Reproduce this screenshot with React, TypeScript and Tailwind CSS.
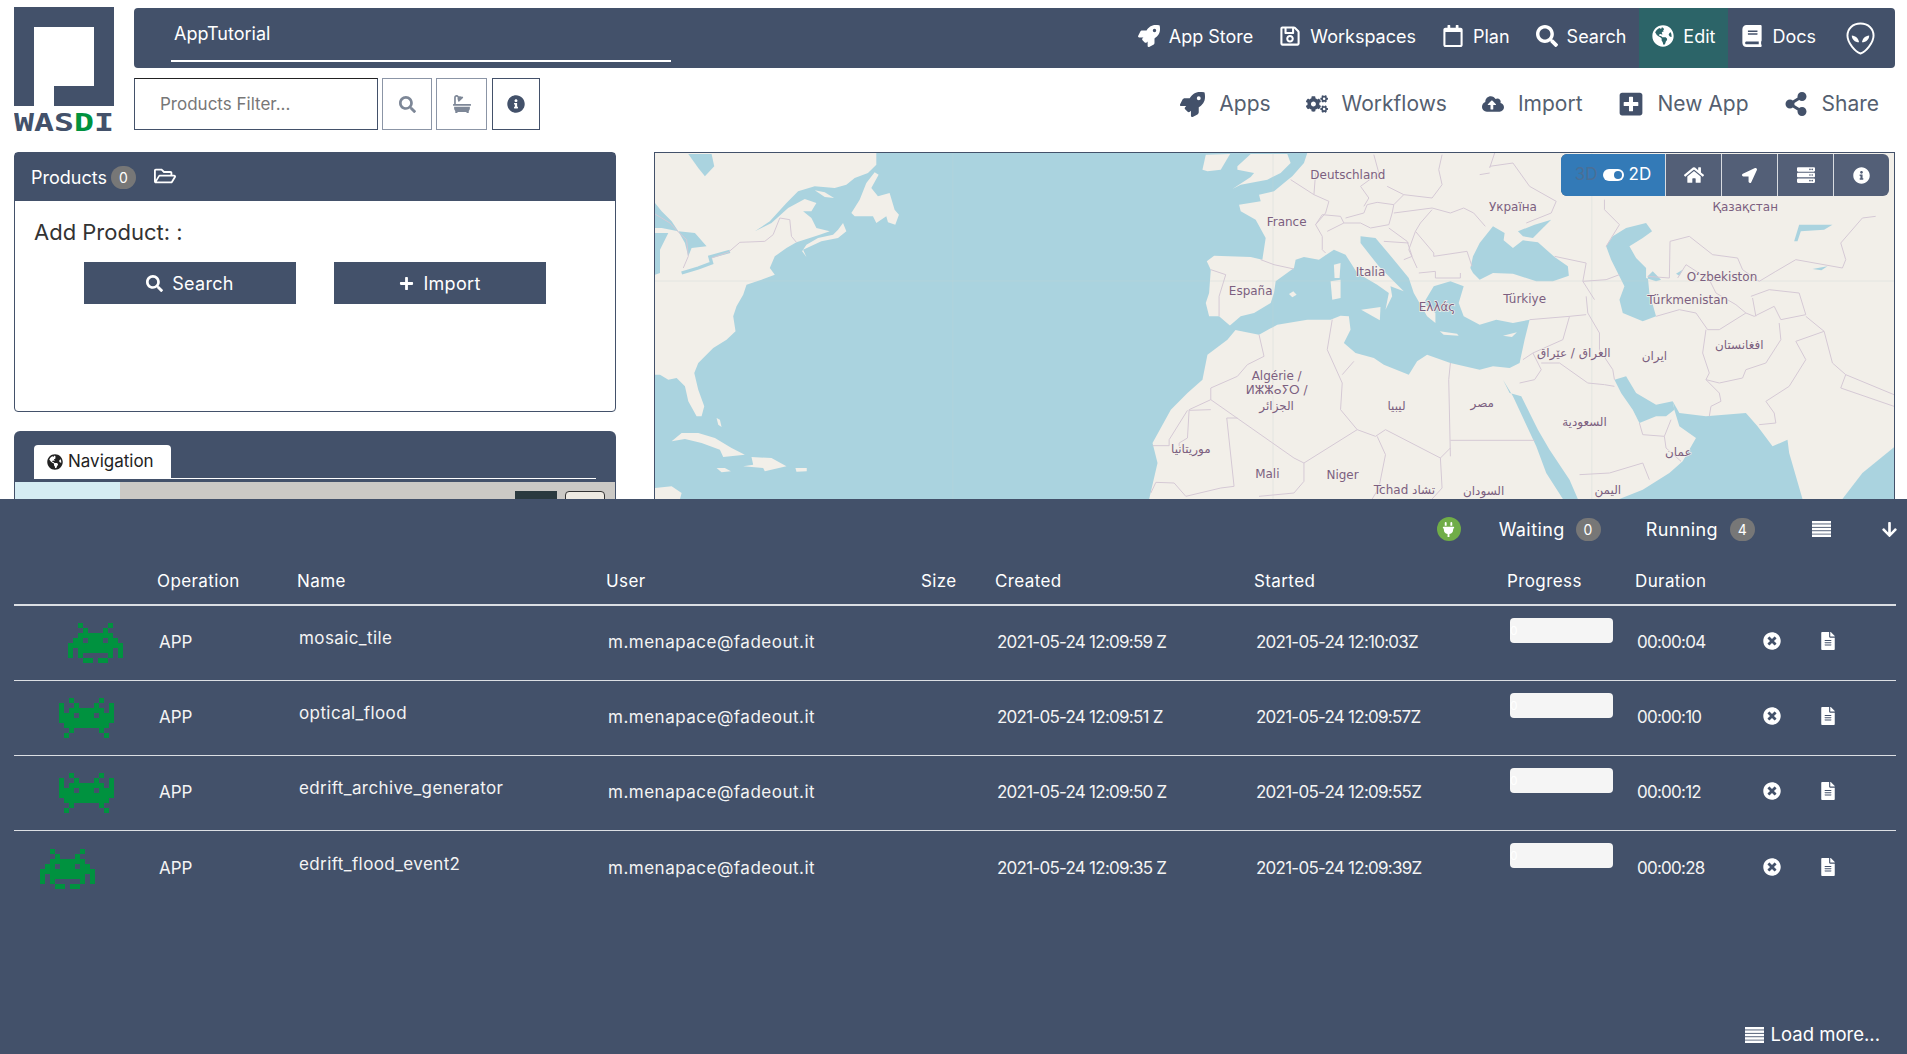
import {
  FaArrowDown, FaBath, FaBook, FaCloudUploadAlt, FaCogs, FaFileAlt, FaGlobeAmericas, FaHome, FaInfoCircle,
  FaLocationArrow, FaPlug, FaPlus, FaPlusSquare, FaRegCalendar, FaRegFolderOpen, FaRegSave, FaRocket,
  FaSearch, FaServer, FaShareAlt, FaTimesCircle,
} from 'react-icons/fa';

const jobs = [
  { name: 'mosaic_tile', created: '2021-05-24 12:09:59 Z', started: '2021-05-24 12:10:03Z', duration: '00:00:04', frame: 0, indent: 'pl-[54px]' },
  { name: 'optical_flood', created: '2021-05-24 12:09:51 Z', started: '2021-05-24 12:09:57Z', duration: '00:00:10', frame: 1, indent: 'pl-[45px]' },
  { name: 'edrift_archive_generator', created: '2021-05-24 12:09:50 Z', started: '2021-05-24 12:09:55Z', duration: '00:00:12', frame: 1, indent: 'pl-[45px]' },
  { name: 'edrift_flood_event2', created: '2021-05-24 12:09:35 Z', started: '2021-05-24 12:09:39Z', duration: '00:00:28', frame: 0, indent: 'pl-[26px]' },
];

const invaderFrames = [
  ['..X.....X..', '...X...X...', '..XXXXXXX..', '.XX.XXX.XX.', 'XXXXXXXXXXX', 'X.XXXXXXX.X', 'X.X.....X.X', '...XX.XX...'],
  ['..X.....X..', 'X..X...X..X', 'X.XXXXXXX.X', 'XXX.XXX.XXX', 'XXXXXXXXXXX', '.XXXXXXXXX.', '..X.....X..', '.X.......X.'],
];

function Invader({ frame }: { frame: number }) {
  return (
    <svg width="55" height="40" viewBox="0 0 11 8" shapeRendering="crispEdges">
      {invaderFrames[frame].map((row, y) =>
        row.split('').map((c, x) => (c === 'X' ? <rect key={x + '-' + y} x={x} y={y} width="1" height="1" fill="#00923f" /> : null)),
      )}
    </svg>
  );
}

function Logo() {
  return (
    <svg width="100" height="130" viewBox="0 0 100 130" className="shrink-0">
      <rect width="100" height="99" fill="#43516a" />
      <path d="M20 20H80V79H40V99H20Z" fill="#fff" />
      <text transform="translate(0 124) scale(1 1.45)" fontFamily="'DejaVu Sans Mono', monospace" fontSize="17" fontWeight="700" fill="#43516a" textLength="100" lengthAdjust="spacingAndGlyphs">
        WAS<tspan fill="#00923f">D</tspan>I
      </text>
    </svg>
  );
}

function Alien() {
  return (
    <svg width="29" height="33" viewBox="0 0 30 34" className="ml-[17px]">
      <path d="M15 1.500C7 1.500 1.500 7 1.500 14C1.500 22 10 31 15 32.500C20 31 28.500 22 28.500 14C28.500 7 23 1.500 15 1.500Z" fill="none" stroke="#fff" strokeWidth="2" />
      <path d="M6 14C10 14.500 13 17 13.500 21C9 21 6 18 6 14Z" fill="#fff" />
      <path d="M24 14C20 14.500 17 17 16.500 21C21 21 24 18 24 14Z" fill="#fff" />
    </svg>
  );
}

function ListIcon({ className }: { className?: string }) {
  return (
    <svg width="19" height="16" viewBox="0 0 19 16" className={className} fill="currentColor">
      <rect width="19" height="2.500" />
      <rect y="3.400" width="19" height="2.500" />
      <rect y="6.800" width="19" height="2.500" />
      <rect y="10.200" width="19" height="2.500" />
      <rect y="13.500" width="19" height="2.500" />
    </svg>
  );
}

function TopItem({ icon, label, active }: { icon: React.ReactNode; label: string; active?: boolean }) {
  return (
    <div className={`flex items-center gap-[9px] h-full px-[13px] pb-[4px] ${active ? 'bg-[#2c6468]' : ''}`}>
      <span className="text-[22px]">{icon}</span>
      <span>{label}</span>
    </div>
  );
}

function ToolItem({ icon, label }: { icon: React.ReactNode; label: string }) {
  return (
    <div className="flex items-center gap-[14px]">
      <span className="text-[#43516a]">{icon}</span>
      <span>{label}</span>
    </div>
  );
}

function Badge({ value }: { value: number }) {
  return (
    <span className="flex items-center justify-center w-[25px] h-[23px] rounded-full bg-[#777] text-[14px] text-white">{value}</span>
  );
}

const land = [
  // north america, crop 6
  '0,0 665,0 665,35 640,60 600,75 575,95 540,105 480,100 430,115 395,150 345,205 300,235 350,210 400,165 450,138 485,150 470,175 445,175 470,195 485,225 525,235 495,245 465,255 425,268 395,285 360,310 345,345 360,365 320,380 275,395 265,425 245,460 235,490 242,535 215,560 175,585 130,630 118,660 130,710 148,760 140,790 125,790 100,745 90,700 65,675 40,680 15,665 0,665',
  '445,290 500,265 550,255 575,235 565,210 550,230 535,245 490,255 455,275 442,295 455,312',
  '590,180 615,140 635,90 660,58 672,65 650,105 670,130 705,120 720,170 733,185 722,215 700,208 695,190 665,210 655,190 600,190',
  '480,112 510,118 538,135 510,132',
  '50,865 80,840 130,840 180,855 230,885 270,905 205,912 195,890 140,870 90,858',
  '265,940 295,935 290,912 350,915 395,940 330,955 325,945',
  '185,945 210,945 228,955 200,958',
  '422,945 456,945 456,955 425,956',
  '0,1005 50,1000 80,1020 75,1038 0,1038',
  '185,795 195,800 200,822 190,815',
];

const westCoast =
  '1960,0 1950,30 1915,70 1900,82 1860,115 1815,125 1820,145 1755,155 1760,175 1805,200 1835,255 1825,320 1790,312 1680,308 1658,325 1670,350 1665,420 1655,450 1665,490 1695,490 1730,520 1745,530 1720,560 1660,605 1645,680 1600,720 1550,770 1495,870 1510,930 1485,1038 3723,1038 3723,0';

const gbIreland = [
  '1645,50 1655,5 1728,3 1700,50 1660,55',
  '1735,108 1790,72 1800,60 1750,50 1750,40 1790,3 1900,3 1910,30 1880,60 1840,80 1760,95',
];

const waters = [
  // mediterranean
  '1725,520 1760,490 1800,480 1850,450 1860,420 1865,385 1920,345 1925,320 1950,312 1995,320 2040,290 2075,305 2110,360 2170,395 2205,420 2195,470 2215,430 2210,400 2250,415 2225,390 2175,340 2120,270 2120,250 2165,255 2220,320 2265,375 2280,420 2320,490 2345,510 2345,480 2310,450 2340,400 2390,385 2430,400 2415,450 2430,490 2478,515 2528,500 2578,510 2628,500 2613,560 2598,630 2568,645 2518,640 2478,650 2390,630 2320,605 2290,625 2265,665 2190,635 2160,615 2105,600 2070,570 2090,530 2085,490 2060,488 2030,500 1960,500 1870,515 1815,545 1740,530',
  // black sea
  '2450,345 2458,310 2478,270 2518,220 2553,240 2550,262 2578,285 2608,262 2653,268 2703,312 2743,340 2746,368 2698,385 2648,385 2578,362 2518,360 2478,380 2458,360',
  '2593,235 2643,215 2693,200 2668,225 2638,255 2608,250',
  // caspian
  '2858,280 2878,250 2918,225 2978,210 2996,235 2968,255 2928,280 2948,315 2978,345 2978,375 3008,385 3023,380 2998,355 2983,370 2988,420 3008,490 2968,505 2908,480 2898,440 2913,400 2873,320',
  // red sea, gulf, arabian sea, bengal
  '2548,680 2568,720 2603,730 2653,830 2688,890 2748,980 2773,1038 2728,1038 2678,960 2648,880 2578,730',
  '2883,680 2918,670 2948,720 3008,755 3058,745 3063,770 3038,790 3008,790 2958,810 2938,770 2903,720',
  '3058,745 3078,780 3158,790 3278,780 3313,820 3358,880 3403,860 3408,900 3448,1038 2898,1038 2968,1010 3048,960 3088,925 3128,855 3078,820 3063,770',
  '3568,1038 3628,960 3726,880 3726,1038',
  // small lakes
  '3423,265 3438,215 3538,215 3513,230 3443,235 3433,265',
  '3068,362 3088,350 3078,368',
  '3478,348 3523,340 3505,352',
  // inland north america
  '100,3 170,3 178,40 150,70 130,45',
  '0,150 20,175 50,205 70,235 20,225 0,225',
  '70,235 120,240 155,280 110,285 100,310 90,270',
  '0,240 40,240 15,290 15,360 0,365',
];

const islands = [
  '2040,335 2060,330 2057,375 2042,375',
  '2030,385 2060,380 2060,435 2035,440',
  '2122,470 2180,462 2178,502',
  '1905,423 1918,415 1928,425 1915,433',
  '2358,535 2410,542 2415,548 2370,545',
  '2548,548 2590,538 2575,552',
];

const borders = [
  // north america
  '0,183 45,210 65,232 95,260 100,310 85,345', '170,315 220,298 255,268 330,265 355,245 375,195 405,200 410,250 425,268',
  // europe
  '1820,320 1860,335 1920,348', '1670,350 1715,365 1695,430 1695,490', '1910,80 1980,125 2025,145 2015,180 1985,215 2005,250 2005,290 2015,300',
  '1980,125 1985,60', '2160,5 2175,60 2120,100 2145,135 2130,160', '1985,215 2005,185 2060,190 2070,210 2020,235', '2075,195 2130,180 2140,155 2170,148 2220,155 2215,180 2205,215 2150,225 2120,210 2070,210',
  '2200,100 2250,125 2335,135 2365,95 2355,50 2365,5', '2220,155 2250,125', '2220,180 2335,165 2390,180 2430,165 2460,180 2495,220', '2335,170 2300,210 2285,235 2340,300 2340,310 2440,295 2455,340',
  '2205,225 2260,265 2275,310 2250,320', '2190,265 2265,270', '2295,360 2345,355 2345,375 2420,375 2420,360', '2285,235 2265,290 2290,345',
  // africa
  '1815,545 1830,610 1780,635 1750,670 1670,705 1670,740 1920,915 1950,930 2110,830 2060,770 2065,690 2020,590 2035,500', '2065,665 2100,625',
  '2390,630 2385,680 2390,910', '2110,830 2165,850 2195,830 2360,915 2390,885', '2170,850 2195,905 2175,1005 2155,1038', '2360,915 2365,1005 2335,1038', '2390,862 2643,862',
  '1718,795 1740,1000 1700,1005 1595,1030 1560,990 1505,988 1490,1020', '1718,795 1750,795', '1950,930 1950,985 1920,1020 1815,1030', '1670,740 1605,770 1600,855 1575,870 1575,880', '1670,770 1605,772', '1495,878 1545,878 1545,860 1600,772',
  // asia
  '2508,40 2578,30 2628,100 2708,145 2693,180 2618,210', '2478,65 2508,60', '2523,0 2508,45', '2853,140 2853,170 2898,215 2858,280', '2703,310 2798,330 2788,385 2823,440', '2788,385 2858,380 2898,365',
  '2628,500 2748,490 2798,485', '2798,430 2803,480 2838,540 2838,590 2878,650 2883,680', '2748,490 2728,560 2638,600', '2663,630 2718,630 2803,690 2853,695 2883,700', '2598,690 2643,680 2663,650 2638,600 2608,620',
  '2958,810 2968,845 3033,850 3053,800', '3033,850 3038,885 3083,925', '2778,965 2868,960 2968,930 2988,980',
  '3158,530 3148,600 3168,660 3158,680 3198,720 3203,745 3173,760 3168,790', '3008,490 3078,470 3128,480 3163,530 3198,530 3278,480 3303,490 3363,460 3383,500 3458,485',
  '3378,510 3383,560 3338,630 3278,650 3268,675 3198,690 3158,680', '3458,490 3513,535 3428,565 3458,620 3408,700 3338,745 3363,780 3368,810 3318,815', '3513,535 3538,630 3578,665 3723,725', '3578,665 3563,705 3723,760',
  '3048,375 3050,265 3108,250 3178,305 3253,315 3268,350 3318,385', '2983,370 3048,375', '3073,375 3098,335 3168,380 3188,420 3248,455 3278,480',
  '3318,385 3368,355 3428,320 3568,345 3578,320 3563,270 3628,195 3668,190', '3293,430 3348,410 3438,420 3458,485', '3308,490 3298,435',
];

const labels: [string, number, number][] = [
  ['Deutschland', 2082, 78], ['France', 1898, 220], ['Italia', 2150, 370], ['España', 1790, 425], ['Ελλάς', 2350, 475],
  ['Algérie /', 1868, 680], ['ⵍⵣⵣⴰⵢⵔ /', 1868, 724], ['الجزائر', 1868, 770], ['ليبيا', 2228, 772], ['مصر', 2486, 762], ['موريتانيا', 1610, 900],
  ['Mali', 1840, 975], ['Niger', 2066, 977], ['Tchad تشاد', 2252, 1022], ['السودان', 2490, 1025],
  ['Україна', 2578, 175], ['Қазақстан', 3276, 175], ['Türkiye', 2613, 450], ['O‘zbekiston', 3206, 385], ['Türkmenistan', 3103, 452],
  ['العراق / عێراق', 2761, 612], ['ايران', 3003, 622], ['افغانستان', 3258, 588], ['السعودية', 2793, 820], ['عمان', 3075, 908], ['اليمن', 2863, 1022],
];

function WorldMap() {
  return (
    <svg viewBox="0 0 3723 1038" className="block w-full h-full" preserveAspectRatio="none">
      <rect width="3723" height="1038" fill="#aad3df" />
      <polygon points={westCoast} fill="#f2efe9" />
      {land.concat(gbIreland).map((p) => <polygon key={p} points={p} fill="#f2efe9" />)}
      {waters.map((p) => <polygon key={p} points={p} fill="#aad3df" />)}
      {islands.map((p) => <polygon key={p} points={p} fill="#f2efe9" />)}
      <polyline points="80,360 130,345 170,330 165,312 225,295" fill="none" stroke="#aad3df" strokeWidth="10" />
      <path d="M0 384H3723M895 0V1038M1857 0V1038M2815 0V1038" stroke="#c4d4d4" strokeWidth="2" opacity="0.45" />
      {borders.map((p) => <polyline key={p} points={p} fill="none" stroke="#d5c9d5" strokeWidth="3" />)}
      {labels.map(([t, x, y]) => (
        <text key={t} x={x} y={y} textAnchor="middle" fontFamily="'DejaVu Sans', sans-serif" fontSize="36" fill="#7c5f80" stroke="#f2efe9" strokeWidth="4" paintOrder="stroke">
          {t}
        </text>
      ))}
    </svg>
  );
}

function MapControl({ children }: { children: React.ReactNode }) {
  return <div className="flex items-center justify-center w-[56px] border-l border-[#d8dbe0] text-white text-[17px]">{children}</div>;
}

function JobRow({ job, last }: { job: (typeof jobs)[number]; last: boolean }) {
  return (
    <div className={`grid grid-cols-[143px_140px_309px_315px_74px_259px_253px_128px_119px_57px_1fr] items-center h-[75px] text-[#f4f4f4] text-[17px] ${last ? '' : 'border-b border-[#dcdfe4]'}`}>
      <div className={job.indent}><Invader frame={job.frame} /></div>
      <div className="pl-[2px]">APP</div>
      <div className="pl-[2px] mb-[8px] tracking-[0.4px]">{job.name}</div>
      <div className="pl-[2px] tracking-[0.5px]">m.menapace@fadeout.it</div>
      <div />
      <div className="pl-[2px] tracking-[-0.75px]">{job.created}</div>
      <div className="pl-[2px] tracking-[-0.75px]">{job.started}</div>
      <div className="pl-[3px] self-start pt-[12px]">
        <div className="w-[103px] h-[25px] rounded-[4px] bg-[#f5f5f5] text-[12px] text-white leading-[25px]">0</div>
      </div>
      <div className="pl-[2px] tracking-[-0.75px]">{job.duration}</div>
      <div className="pl-[9px] mb-[4px] text-white text-[18px]"><FaTimesCircle /></div>
      <div className="pl-[8px] mb-[4px] text-white text-[18px]"><FaFileAlt /></div>
    </div>
  );
}

export default function App() {
  return (
    <div className="flex flex-col w-[1907px] h-[1054px] overflow-hidden bg-white font-['Inter',sans-serif]">
      <div className="h-[499px] overflow-hidden">
        <div className="flex items-start gap-[20px] pl-[14px] pr-[12px] pt-[7px] h-[131px]">
          <Logo />
          <div className="flex-1 flex flex-col">
            <div className="flex items-center justify-between h-[60px] mt-[1px] pl-[37px] pr-[20px] rounded-[4px] bg-[#43516a] text-white text-[18px]">
              <div className="w-[500px] h-[49px] mt-[-1px] border-b-2 border-white pl-[3px] pt-[8px] leading-[26px]">AppTutorial</div>
              <div className="flex items-center h-full">
                <TopItem icon={<FaRocket />} label="App Store" />
                <TopItem icon={<FaRegSave />} label="Workspaces" />
                <TopItem icon={<FaRegCalendar />} label="Plan" />
                <TopItem icon={<FaSearch />} label="Search" />
                <TopItem icon={<FaGlobeAmericas />} label="Edit" active />
                <TopItem icon={<FaBook />} label="Docs" />
                <Alien />
              </div>
            </div>
            <div className="flex items-center h-[52px] mt-[10px]">
              <div className="w-[244px] h-full border border-[#43516a] border-t-[#222] pl-[25px] leading-[50px] text-[17px] text-[#777]">Products Filter...</div>
              <div className="flex items-center justify-center w-[50px] h-full ml-[4px] border border-[#8b95a6] text-[#7d8797] text-[17px]"><FaSearch /></div>
              <div className="flex items-center justify-center w-[51px] h-full ml-[4px] border border-[#8b95a6] text-[#7d8797] text-[18px]"><FaBath /></div>
              <div className="flex items-center justify-center w-[48px] h-full ml-[5px] border border-[#43516a] text-[#43516a] text-[18px]"><FaInfoCircle /></div>
              <div className="flex items-center justify-end gap-[35px] flex-1 pr-[16px] text-[21px] text-[#555f70]">
                <ToolItem icon={<FaRocket className="text-[25px]" />} label="Apps" />
                <ToolItem icon={<FaCogs className="text-[22px]" />} label="Workflows" />
                <ToolItem icon={<FaCloudUploadAlt className="text-[22px]" />} label="Import" />
                <ToolItem icon={<FaPlusSquare className="text-[26px]" />} label="New App" />
                <ToolItem icon={<FaShareAlt className="text-[24px]" />} label="Share" />
              </div>
            </div>
          </div>
        </div>
        <div className="flex gap-[38px] pl-[14px] pr-[12px] mt-[21px]">
          <div className="w-[602px] shrink-0">
            <div className="h-[260px] rounded-[4px] border border-[#43516a]">
              <div className="flex items-center h-[48px] pl-[16px] bg-[#43516a] text-white text-[18px]">
                <span>Products</span>
                <span className="ml-[4px]"><Badge value={0} /></span>
                <FaRegFolderOpen className="ml-[18px] mb-[2px] text-[22px]" />
              </div>
              <div className="pt-[15px] pl-[19px] text-[22px] leading-[32px] text-[#333]">Add Product: :</div>
              <div className="flex gap-[38px] pl-[69px] mt-[14px]">
                <div className="flex items-center justify-center gap-[9px] w-[212px] h-[42px] bg-[#43516a] text-white text-[18px] tracking-[0.3px]"><FaSearch className="text-[17px]" />Search</div>
                <div className="flex items-center justify-center gap-[9px] w-[212px] h-[42px] bg-[#43516a] text-white text-[18px] tracking-[0.3px]"><FaPlus className="text-[15px]" />Import</div>
              </div>
            </div>
            <div className="mt-[19px] h-[120px] rounded-t-[6px] bg-[#43516a] px-[1px]">
              <div className="pt-[14px] pl-[19px] pr-[19px]">
                <div className="border-b border-white h-[34px]">
                  <div className="flex items-center gap-[5px] w-[137px] h-[34px] pl-[13px] rounded-t-[4px] bg-white text-[17px] text-[#222]"><FaGlobeAmericas className="text-[16px]" />Navigation</div>
                </div>
              </div>
              <div className="relative mt-[3px] h-[40px] bg-[#cbc9c5]">
                <div className="w-[105px] h-full bg-[#d5ecf3]" />
                <div className="absolute left-[500px] top-[9px] w-[42px] h-[30px] bg-[#2b3a3f]" />
                <div className="absolute left-[550px] top-[9px] w-[40px] h-[30px] rounded-[4px] border border-[#333] bg-[#eeeae2]" />
              </div>
            </div>
          </div>
          <div className="relative flex-1 h-[348px] border border-[#43516a]">
            <WorldMap />
            <div className="absolute right-[5px] top-[1px] flex h-[42px] rounded-[6px] overflow-hidden bg-[#535f77]">
              <div className="flex items-center justify-center gap-[5px] w-[104px] bg-[#337ab7] text-[17px] text-white">
                <span className="text-[#4a6f96]">3D</span>
                <span className="flex items-center justify-end w-[21px] h-[12px] rounded-full bg-white pr-[2px]"><span className="w-[8px] h-[8px] rounded-full bg-[#337ab7]" /></span>
                <span>2D</span>
              </div>
              <MapControl><FaHome className="text-[20px]" /></MapControl>
              <MapControl><FaLocationArrow className="text-[15px]" /></MapControl>
              <MapControl><FaServer className="text-[18px]" /></MapControl>
              <MapControl><FaInfoCircle /></MapControl>
            </div>
          </div>
        </div>
      </div>
      <div className="flex-1 flex flex-col bg-[#43516a] pl-[14px] pr-[11px] text-white">
        <div className="flex items-center justify-end h-[60px] text-[18px] tracking-[0.4px] mr-[-2px]">
          <span className="flex items-center justify-center w-[24px] h-[24px] rounded-full bg-[#70ad47] text-white text-[15px]"><FaPlug /></span>
          <span className="ml-[38px]">Waiting</span>
          <span className="ml-[11px]"><Badge value={0} /></span>
          <span className="ml-[45px]">Running</span>
          <span className="ml-[12px]"><Badge value={4} /></span>
          <ListIcon className="ml-[57px]" />
          <FaArrowDown className="ml-[50px] text-[17px]" />
        </div>
        <div className="grid grid-cols-[143px_140px_309px_315px_74px_259px_253px_128px_1fr] items-center h-[47px] border-b-2 border-[#dcdfe4] text-[17px] tracking-[0.4px]">
          <div />
          <div>Operation</div>
          <div>Name</div>
          <div>User</div>
          <div>Size</div>
          <div>Created</div>
          <div>Started</div>
          <div>Progress</div>
          <div>Duration</div>
        </div>
        {jobs.map((job, i) => <JobRow key={job.name} job={job} last={i === jobs.length - 1} />)}
        <div className="flex items-center justify-end gap-[7px] mt-auto mb-[5px] pr-[16px] text-[18.5px]">
          <ListIcon />
          <span>Load more...</span>
        </div>
      </div>
    </div>
  );
}
